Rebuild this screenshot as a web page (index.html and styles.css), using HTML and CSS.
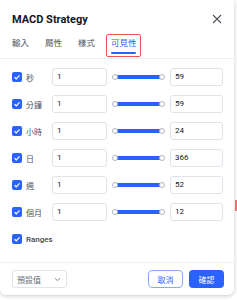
FILE: index.html
```html
<!DOCTYPE html>
<html>
<head>
<meta charset="utf-8">
<link rel="stylesheet" href="styles.css">
</head>
<body>
<div class="dialog">
  <div class="header">
    <div class="title">MACD Strategy</div>
    <svg class="close" width="10" height="10" viewBox="0 0 10 10"><path d="M1 1L9 9M9 1L1 9" stroke="#50535e" stroke-width="1.1" fill="none"/></svg>
  </div>
  <div class="tabs">
    <div class="tab">輸入</div>
    <div class="tab">屬性</div>
    <div class="tab">樣式</div>
    <div class="tab active">可見性</div>
  </div>
  <div class="content">
    <div class="row">
      <span class="cb"><svg width="10" height="10" viewBox="0 0 10 10"><path d="M2.6 5.2L4.3 6.8L7.5 3.4" stroke="#fff" stroke-width="1.2" fill="none"/></svg></span>
      <span class="label">秒</span>
      <div class="input first">1</div>
      <div class="slider"><span class="knob"></span><span class="track"></span><span class="knob"></span></div>
      <div class="input last">59</div>
    </div>
    <div class="row">
      <span class="cb"><svg width="10" height="10" viewBox="0 0 10 10"><path d="M2.6 5.2L4.3 6.8L7.5 3.4" stroke="#fff" stroke-width="1.2" fill="none"/></svg></span>
      <span class="label">分鐘</span>
      <div class="input first">1</div>
      <div class="slider"><span class="knob"></span><span class="track"></span><span class="knob"></span></div>
      <div class="input last">59</div>
    </div>
    <div class="row">
      <span class="cb"><svg width="10" height="10" viewBox="0 0 10 10"><path d="M2.6 5.2L4.3 6.8L7.5 3.4" stroke="#fff" stroke-width="1.2" fill="none"/></svg></span>
      <span class="label">小時</span>
      <div class="input first">1</div>
      <div class="slider"><span class="knob"></span><span class="track"></span><span class="knob"></span></div>
      <div class="input last">24</div>
    </div>
    <div class="row">
      <span class="cb"><svg width="10" height="10" viewBox="0 0 10 10"><path d="M2.6 5.2L4.3 6.8L7.5 3.4" stroke="#fff" stroke-width="1.2" fill="none"/></svg></span>
      <span class="label">日</span>
      <div class="input first">1</div>
      <div class="slider"><span class="knob"></span><span class="track"></span><span class="knob"></span></div>
      <div class="input last">366</div>
    </div>
    <div class="row">
      <span class="cb"><svg width="10" height="10" viewBox="0 0 10 10"><path d="M2.6 5.2L4.3 6.8L7.5 3.4" stroke="#fff" stroke-width="1.2" fill="none"/></svg></span>
      <span class="label">週</span>
      <div class="input first">1</div>
      <div class="slider"><span class="knob"></span><span class="track"></span><span class="knob"></span></div>
      <div class="input last">52</div>
    </div>
    <div class="row">
      <span class="cb"><svg width="10" height="10" viewBox="0 0 10 10"><path d="M2.6 5.2L4.3 6.8L7.5 3.4" stroke="#fff" stroke-width="1.2" fill="none"/></svg></span>
      <span class="label">個月</span>
      <div class="input first">1</div>
      <div class="slider"><span class="knob"></span><span class="track"></span><span class="knob"></span></div>
      <div class="input last">12</div>
    </div>
    <div class="row ranges">
      <span class="cb"><svg width="10" height="10" viewBox="0 0 10 10"><path d="M2.6 5.2L4.3 6.8L7.5 3.4" stroke="#fff" stroke-width="1.2" fill="none"/></svg></span>
      <span class="label">Ranges</span>
    </div>
  </div>
  <div class="footer">
    <div class="select"><span>預設值</span><svg width="7" height="5" viewBox="0 0 7 5"><path d="M1 1.3L3.5 3.6L6 1.3" stroke="#787b86" stroke-width="0.9" fill="none"/></svg></div>
    <div class="buttons">
      <div class="btn cancel">取消</div>
      <div class="btn ok">確認</div>
    </div>
  </div>
</div>
<div class="bg-mark red"></div>
</body>
</html>
```
FILE: styles.css
```css
html, body {
  margin: 0;
  padding: 0;
}
body {
  width: 237px;
  height: 300px;
  background: #ffffff;
  font-family: "Roboto", "Noto Sans CJK TC", sans-serif;
  color: #131722;
  overflow: hidden;
  position: relative;
}
.dialog {
  width: 234px;
  height: 295px;
  background: #fff;
  border-radius: 0 0 6px 6px;
  box-shadow: 0 1px 4px rgba(0, 0, 0, 0.22);
  display: flex;
  flex-direction: column;
}
.header {
  height: 38px;
  padding: 0 12px;
  display: flex;
  align-items: center;
  justify-content: space-between;
}
.title {
  font-size: 11px;
  font-weight: 700;
  color: #131722;
  padding-top: 1px;
}
.close {
  display: block;
}
.tabs {
  height: 20px;
  padding: 0 12px;
  display: flex;
  gap: 16px;
  border-bottom: 1px solid #eceef2;
}
.tab {
  position: relative;
  font-size: 8.5px;
  line-height: 11px;
  color: #50535e;
  height: 20px;
  box-sizing: border-box;
}
.tab.active {
  color: #2962ff;
}
.tab.active::after {
  content: "";
  position: absolute;
  left: 0;
  right: 1px;
  bottom: 4px;
  height: 2px;
  border-radius: 1px;
  background: #2962ff;
}
.tab.active::before {
  content: "";
  position: absolute;
  left: -5px;
  right: -4px;
  top: -4px;
  bottom: 1px;
  border: 1px solid #f0524f;
  border-radius: 2px;
}
.content {
  flex: 1;
  padding: 9px 11px 0 12px;
  display: flex;
  flex-direction: column;
  gap: 9px;
}
.row {
  height: 18px;
  display: flex;
  align-items: center;
}
.cb {
  width: 10px;
  height: 10px;
  border-radius: 2px;
  background: #2962ff;
  display: block;
  flex: none;
  margin-right: 4px;
}
.cb svg {
  display: block;
}
.label {
  width: 26px;
  flex: none;
  font-size: 8px;
  color: #50535e;
  white-space: nowrap;
}
.ranges .label {
  color: #434651;
  font-weight: 500;
}
.input {
  height: 18px;
  box-sizing: border-box;
  border: 1px solid #e0e3eb;
  border-radius: 3px;
  font-size: 8px;
  line-height: 16px;
  padding-left: 4px;
  color: #131722;
  flex: none;
}
.input.first {
  width: 55px;
}
.input.last {
  width: 53px;
}
.slider {
  width: 53px;
  margin: 0 5px;
  flex: none;
  display: flex;
  align-items: center;
  height: 6px;
}
.knob {
  width: 6px;
  height: 6px;
  box-sizing: border-box;
  border: 1px solid #b2b5be;
  background: #fff;
  border-radius: 50%;
  flex: none;
  position: relative;
  z-index: 1;
}
.track {
  flex: 1;
  height: 4px;
  background: #2962ff;
  margin: 0 -1px;
}
.footer {
  height: 32px;
  border-top: 1px solid #eef0f3;
  padding: 0 10px 0 12px;
  display: flex;
  align-items: center;
  justify-content: space-between;
}
.select {
  width: 55px;
  height: 18px;
  box-sizing: border-box;
  border: 1px solid #e0e3eb;
  border-radius: 3px;
  display: flex;
  align-items: center;
  justify-content: space-between;
  padding: 0 5px 0 4px;
  font-size: 8px;
  color: #6a6d78;
}
.select svg {
  display: block;
}
.buttons {
  display: flex;
  gap: 6px;
}
.btn {
  width: 35px;
  height: 18px;
  box-sizing: border-box;
  border-radius: 4px;
  font-size: 8px;
  display: flex;
  align-items: center;
  justify-content: center;
}
.cancel {
  border: 1px solid #8aa9f5;
  color: #2962ff;
  background: #fff;
}
.ok {
  background: #2962ff;
  color: #fff;
}
.bg-mark {
  position: absolute;
}
.bg-mark.red {
  left: 235px;
  top: 200px;
  width: 2px;
  height: 11px;
  background: #e57373;
}
```
